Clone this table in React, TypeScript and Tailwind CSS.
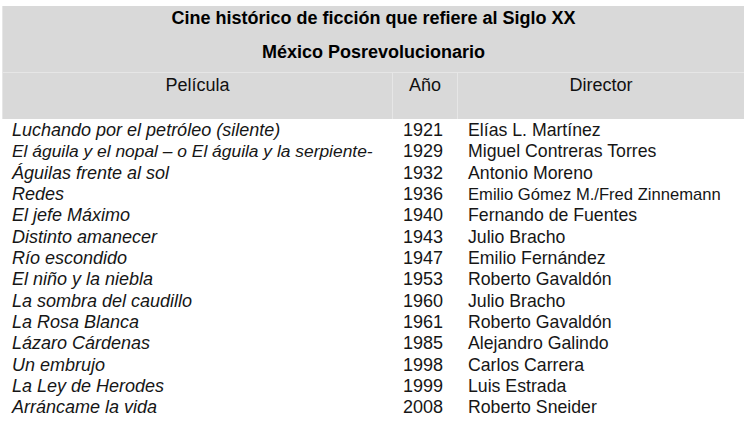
import React from "react";

interface Film {
  title: string;
  year: string;
  director: string;
  longTitle?: boolean;
  small?: boolean;
}

const films: Film[] = [
  { title: "Luchando por el petróleo (silente)", year: "1921", director: "Elías L. Martínez" },
  { title: "El águila y el nopal – o El águila y la serpiente-", year: "1929", director: "Miguel Contreras Torres", longTitle: true },
  { title: "Águilas frente al sol", year: "1932", director: "Antonio Moreno" },
  { title: "Redes", year: "1936", director: "Emilio Gómez M./Fred Zinnemann", small: true },
  { title: "El jefe Máximo", year: "1940", director: "Fernando de Fuentes" },
  { title: "Distinto amanecer", year: "1943", director: "Julio Bracho" },
  { title: "Río escondido", year: "1947", director: "Emilio Fernández" },
  { title: "El niño y la niebla", year: "1953", director: "Roberto Gavaldón" },
  { title: "La sombra del caudillo", year: "1960", director: "Julio Bracho" },
  { title: "La Rosa Blanca", year: "1961", director: "Roberto Gavaldón" },
  { title: "Lázaro Cárdenas", year: "1985", director: "Alejandro Galindo" },
  { title: "Un embrujo", year: "1998", director: "Carlos Carrera" },
  { title: "La Ley de Herodes", year: "1999", director: "Luis Estrada" },
  { title: "Arráncame la vida", year: "2008", director: "Roberto Sneider" },
];

const App: React.FC = () => {
  return (
    <div className="w-[749px] h-[428px] bg-white pt-[6px] pl-[2px] text-[#161616] font-['Liberation_Sans',Arial,sans-serif] overflow-hidden">
      {/* Gray header block */}
      <div className="w-[742px] bg-[#d9d9d9] border-l border-[#e6e6e6]">
        <div className="h-[66px] flex flex-col items-center text-[18px] font-bold text-black">
          <div className="h-[25px] leading-[25px]">Cine histórico de ficción que refiere al Siglo XX</div>
          <div className="h-[25px] leading-[25px] mt-[9px]">México Posrevolucionario</div>
        </div>
        <div className="flex h-[47px] border-t border-[#e6e6e6] text-[18px] leading-[24px] text-[#111]">
          <div className="w-[389px] text-center">Película</div>
          <div className="w-[65px] text-center border-l border-[#e6e6e6]">Año</div>
          <div className="flex-1 text-center border-l border-[#e6e6e6]">Director</div>
        </div>
      </div>

      {/* List of films */}
      <div className="mt-px">
        {films.map((film) => (
          <div key={film.year + film.title} className="grid grid-cols-[390px_65px_287px] h-[21.35px] leading-[21.35px] text-[18px]">
            <div className={`pl-[10px] italic whitespace-nowrap ${film.longTitle ? "text-[17.4px]" : ""}`}>{film.title}</div>
            <div className="text-center pr-[3px]">{film.year}</div>
            <div className={`pl-[11px] whitespace-nowrap ${film.small ? "text-[16.6px]" : "text-[17.7px]"}`}>{film.director}</div>
          </div>
        ))}
      </div>
    </div>
  );
};

export default App;
